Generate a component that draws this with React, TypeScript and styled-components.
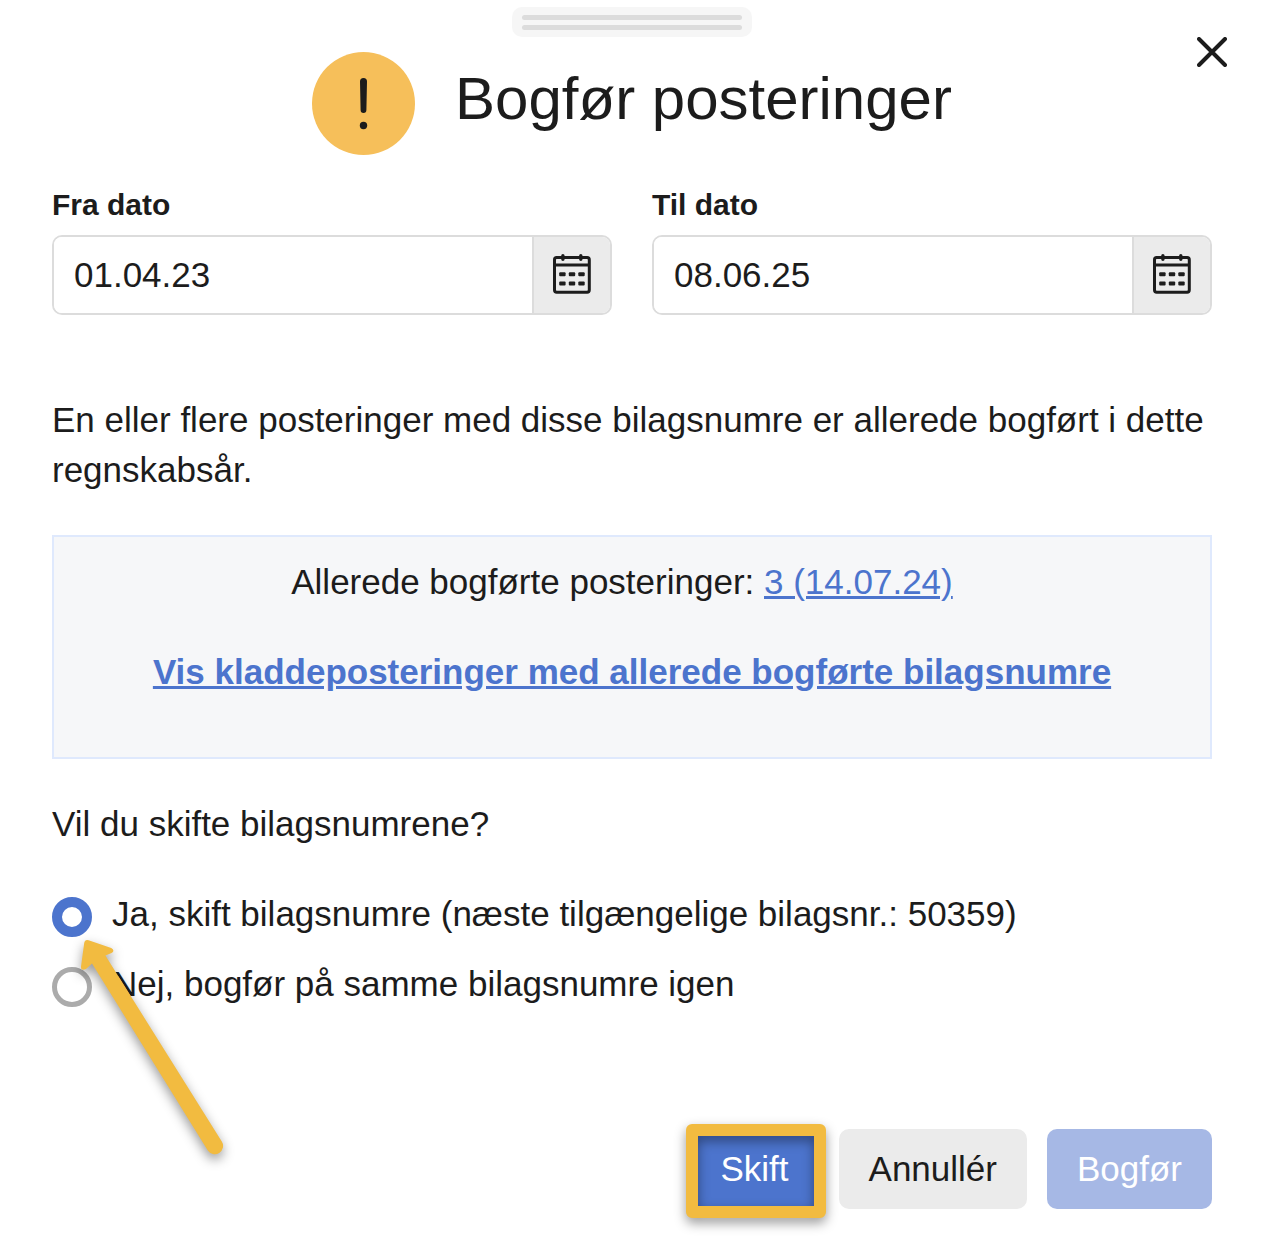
import { useState } from "react";
import styled, { createGlobalStyle } from "styled-components";

const color = {
  text: "#1c1c1c",
  blue: "#4c74cd",
  blueMuted: "#a6b8e5",
  grey: "#ebebeb",
  line: "#dcdcdc",
  amber: "#f6bf5a",
  marker: "#f2bb40",
};

const GlobalStyle = createGlobalStyle`
  *, *::before, *::after { box-sizing: border-box; }
  body {
    margin: 0;
    background: #fff;
    color: ${color.text};
    font-family: "Liberation Sans", Arial, Helvetica, sans-serif;
    font-size: 35px;
    line-height: 50px;
  }
  h1, p { margin: 0; }
  button, input { font: inherit; color: inherit; }
`;

const Dialog = styled.main`
  position: relative;
  display: flex;
  flex-direction: column;
  padding: 7px 50px 50px 52px;
`;

const DragHandle = styled.div`
  align-self: center;
  display: flex;
  flex-direction: column;
  gap: 5px;
  width: 240px;
  height: 30px;
  padding: 8px 10px 7px;
  border-radius: 10px;
  background: #f6f6f6;
`;

const Grip = styled.span`
  flex: none;
  height: 5px;
  border-radius: 3px;
  background: ${color.line};
`;

const CloseButton = styled.button`
  position: absolute;
  top: 32px;
  right: 30px;
  display: grid;
  place-items: center;
  width: 40px;
  height: 40px;
  padding: 0;
  border: 0;
  background: none;
  cursor: pointer;
`;

const Header = styled.header`
  display: flex;
  justify-content: center;
  align-items: center;
  gap: 40px;
  margin: 15px 0 30px;
`;

const Title = styled.h1`
  margin-bottom: 10px;
  font-size: 60px;
  line-height: 70px;
  font-weight: 400;
`;

const DateFields = styled.div`
  display: grid;
  grid-template-columns: 1fr 1fr;
  gap: 40px;
  margin-bottom: 80px;
`;

const Field = styled.div`
  display: flex;
  flex-direction: column;
  gap: 10px;
  min-width: 0;
`;

const FieldLabel = styled.label`
  font-size: 30px;
  line-height: 40px;
  font-weight: 700;
`;

const InputGroup = styled.div`
  display: flex;
  height: 80px;
  border: 2px solid ${color.line};
  border-radius: 10px;
  overflow: hidden;
`;

const DateInput = styled.input`
  flex: 1;
  min-width: 0;
  padding: 0 20px;
  border: 0;
  outline: 0;
  background: #fff;
`;

const CalendarButton = styled.button`
  display: grid;
  place-items: center;
  width: 78px;
  padding: 0;
  border: 0;
  border-left: 2px solid ${color.line};
  background: ${color.grey};
  cursor: pointer;
  svg { overflow: visible; }
`;

const Notice = styled.section`
  display: flex;
  flex-direction: column;
  gap: 40px;
  margin: 40px 0;
  padding: 20px 20px 60px;
  border: 2px solid #dfe9fd;
  background: #f6f7f9;
  text-align: center;
`;

const PostedEntries = styled.p`
  padding-right: 20px;
`;

const Link = styled.a<{ $strong?: boolean }>`
  color: ${color.blue};
  font-weight: ${(p) => (p.$strong ? 700 : 400)};
  text-decoration: underline;
`;

const Options = styled.div`
  position: relative;
  display: flex;
  flex-direction: column;
  gap: 24px;
  margin: 42px 0 122px;
`;

const Option = styled.label`
  display: flex;
  align-items: flex-end;
  gap: 20px;
  line-height: 46px;
  cursor: pointer;
`;

const Radio = styled.input`
  appearance: none;
  flex: none;
  width: 40px;
  height: 40px;
  margin: 0;
  border: 5px solid #ababab;
  border-radius: 50%;
  background: #fff;
  &:checked {
    border: 10px solid ${color.blue};
  }
`;

const Arrow = styled.svg`
  position: absolute;
  top: 40px;
  left: 20px;
  overflow: visible;
  pointer-events: none;
  filter: drop-shadow(0 5px 6px rgba(0, 0, 0, 0.4));
`;

const Actions = styled.footer`
  display: flex;
  justify-content: flex-end;
  gap: 20px;
`;

const Highlight = styled.div`
  position: relative;
  &::after {
    content: "";
    position: absolute;
    inset: -5px -7px -9px -4px;
    border: 12px solid ${color.marker};
    border-radius: 6px;
    filter: drop-shadow(0 5px 6px rgba(0, 0, 0, 0.4));
    pointer-events: none;
  }
`;

const Button = styled.button<{ $tone: "primary" | "neutral" }>`
  height: 80px;
  padding: 0 30px;
  border: 0;
  border-radius: 10px;
  background: ${(p) => (p.$tone === "primary" ? color.blue : color.grey)};
  color: ${(p) => (p.$tone === "primary" ? "#fff" : color.text)};
  cursor: pointer;
  &:disabled {
    background: ${color.blueMuted};
    cursor: default;
  }
`;

const WarningIcon = () => (
  <svg width="103" height="103" viewBox="0 0 103 103" aria-hidden="true">
    <circle cx="51.5" cy="51.5" r="51.5" fill={color.amber} />
    <path
      d="M48 29.5a3.5 3.5 0 0 1 7 0l-.6 28.6a2.9 2.9 0 0 1-5.8 0z"
      fill={color.text}
    />
    <circle cx="51.5" cy="73.5" r="3.7" fill={color.text} />
  </svg>
);

const CrossIcon = () => (
  <svg width="30" height="30" viewBox="0 0 30 30" aria-hidden="true">
    <path
      d="M2 2l26 26M28 2L2 28"
      stroke={color.text}
      strokeWidth="4"
      strokeLinecap="round"
    />
  </svg>
);

const CalendarIcon = () => (
  <svg width="40" height="40" viewBox="0 0 40 40" fill="none" aria-hidden="true">
    <rect x="2.5" y="2.6" width="34.8" height="34.6" rx="2.2" stroke={color.text} strokeWidth="3" />
    <path d="M2 10h36" stroke={color.text} strokeWidth="2.8" />
    <path d="M10.9 .8v3.4M28.8 .8v3.4" stroke={color.text} strokeWidth="3.4" strokeLinecap="round" />
    <g fill={color.text}>
      {[17.3, 26.6].map((y) =>
        [7.2, 16.8, 26.3].map((x) => (
          <rect key={`${x}-${y}`} x={x} y={y} width="6.4" height="4" rx="1" />
        )),
      )}
    </g>
  </svg>
);

const DateField = ({ id, label, initial }: { id: string; label: string; initial: string }) => {
  const [value, setValue] = useState(initial);
  return (
    <Field>
      <FieldLabel htmlFor={id}>{label}</FieldLabel>
      <InputGroup>
        <DateInput id={id} type="text" value={value} onChange={(e) => setValue(e.target.value)} />
        <CalendarButton type="button" aria-label={`Vælg ${label.toLowerCase()}`}>
          <CalendarIcon />
        </CalendarButton>
      </InputGroup>
    </Field>
  );
};

export default function App() {
  const [choice, setChoice] = useState("ja");
  return (
    <>
      <GlobalStyle />
      <Dialog>
        <DragHandle>
          <Grip />
          <Grip />
        </DragHandle>
        <CloseButton type="button" aria-label="Luk">
          <CrossIcon />
        </CloseButton>

        <Header>
          <WarningIcon />
          <Title>Bogfør posteringer</Title>
        </Header>

        <DateFields>
          <DateField id="fra" label="Fra dato" initial="01.04.23" />
          <DateField id="til" label="Til dato" initial="08.06.25" />
        </DateFields>

        <p>
          En eller flere posteringer med disse bilagsnumre er allerede bogført i dette
          regnskabsår.
        </p>

        <Notice>
          <PostedEntries>
            Allerede bogførte posteringer: <Link href="#postering">3 (14.07.24)</Link>
          </PostedEntries>
          <p>
            <Link href="#kladde" $strong>
              Vis kladdeposteringer med allerede bogførte bilagsnumre
            </Link>
          </p>
        </Notice>

        <p id="skift-label">Vil du skifte bilagsnumrene?</p>
        <Options role="radiogroup" aria-labelledby="skift-label">
          <Option>
            <Radio type="radio" name="skift" checked={choice === "ja"} onChange={() => setChoice("ja")} />
            Ja, skift bilagsnumre (næste tilgængelige bilagsnr.: 50359)
          </Option>
          <Option>
            <Radio type="radio" name="skift" checked={choice === "nej"} onChange={() => setChoice("nej")} />
            Nej, bogfør på samme bilagsnumre igen
          </Option>
          <Arrow width="160" height="230" viewBox="0 0 160 230" aria-hidden="true">
            <path
              d="M12.2 12Q12.8 8.2 16.6 9.2L39.2 17Q43.4 19.6 39.6 22L33.4 24.6L149.8 210.6A8.2 8.2 0 0 1 135.8 219.4L20 32.6L14 38Q8.6 40.4 9 35.4Z"
              fill={color.marker}
            />
          </Arrow>
        </Options>

        <Actions>
          <Highlight>
            <Button type="button" $tone="primary">Skift</Button>
          </Highlight>
          <Button type="button" $tone="neutral">Annullér</Button>
          <Button type="button" $tone="primary" disabled>Bogfør</Button>
        </Actions>
      </Dialog>
    </>
  );
}
